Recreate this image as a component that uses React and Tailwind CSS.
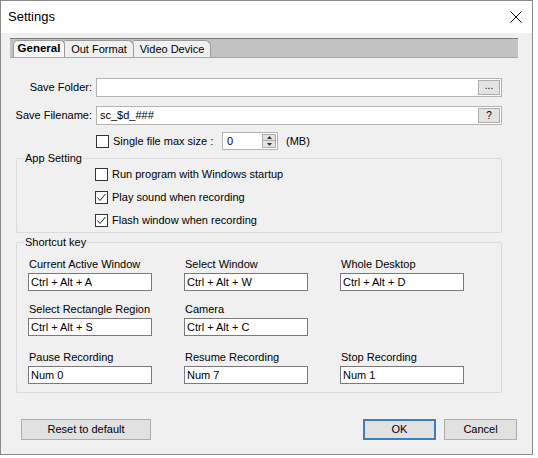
import React from 'react';

const Check = ({ checked }) => (
  <span className="w-[13px] h-[13px] border border-[#333333] bg-white flex items-center justify-center shrink-0">
    {checked && (
      <svg width="11" height="11" viewBox="0 0 11 11">
        <path d="M1.5 5.5 L4 8.5 L9.5 2" fill="none" stroke="#222" strokeWidth="1" />
      </svg>
    )}
  </span>
);

const shortcuts = [
  [
    { label: 'Current Active Window', value: 'Ctrl + Alt + A' },
    { label: 'Select Window', value: 'Ctrl + Alt + W' },
    { label: 'Whole Desktop', value: 'Ctrl + Alt + D' },
  ],
  [
    { label: 'Select Rectangle Region', value: 'Ctrl + Alt + S' },
    { label: 'Camera', value: 'Ctrl + Alt + C' },
  ],
  [
    { label: 'Pause Recording', value: 'Num 0' },
    { label: 'Resume Recording', value: 'Num 7' },
    { label: 'Stop Recording', value: 'Num 1' },
  ],
];

const rowMargins = ['mt-[6px]', 'mt-[10px]', 'mt-[13px]'];

const App = () => {
  return (
    <div className="w-[538px] h-[458px] bg-white font-['Liberation_Sans',Arial,sans-serif] text-[11px] text-black">
      <div className="w-[533px] h-[455px] border border-[#8a8a8a] bg-[#f0f0f0] flex flex-col">
        {/* title bar */}
        <div className="h-[32px] bg-white flex items-center justify-between pl-[7px] pr-[10px]">
          <span className="text-[13px]">Settings</span>
          <svg width="12" height="12" viewBox="0 0 12 12">
            <path d="M0.5 0.5 L11.5 11.5 M11.5 0.5 L0.5 11.5" stroke="#111" strokeWidth="1" />
          </svg>
        </div>

        {/* tabs */}
        <div className="mt-[5px] ml-[9px] w-[508px] h-[20px] bg-[#c2c2c2] border-t border-t-[#7c7c7c] border-b border-b-[#a8a8a8] flex items-end pl-[3px]">
          <div className="h-[17px] px-[4px] bg-[#f7f7f7] border border-b-0 border-[#9a9a9a] rounded-t-[5px] flex items-center font-bold text-[11.5px] w-[52px] justify-center">
            General
          </div>
          <div className="h-[17px] bg-[#f0f0f0] border border-b-0 border-l-0 border-[#9a9a9a] rounded-tr-[6px] flex items-center justify-center w-[69px]">
            Out Format
          </div>
          <div className="h-[17px] bg-[#f0f0f0] border border-b-0 border-l-0 border-[#9a9a9a] rounded-tr-[6px] flex items-center justify-center w-[77px]">
            Video Device
          </div>
        </div>

        {/* save folder */}
        <div className="mt-[20px] flex items-center">
          <span className="w-[91px] text-right">Save Folder:</span>
          <div className="ml-[4px] w-[406px] h-[19px] bg-white border border-[#b4b4b4] flex items-center justify-end pr-[1px]">
            <div className="w-[22px] h-[15px] bg-[#e3e3e3] border border-[#adadad] flex items-center justify-center text-[10px] leading-none pb-[3px]">
              ...
            </div>
          </div>
        </div>

        {/* save filename */}
        <div className="mt-[9px] flex items-center">
          <span className="w-[91px] text-right">Save Filename:</span>
          <div className="ml-[4px] w-[406px] h-[19px] bg-white border border-[#b4b4b4] flex items-center justify-between pl-[3px] pr-[1px]">
            <span>sc_$d_###</span>
            <div className="w-[22px] h-[15px] bg-[#e3e3e3] border border-[#adadad] flex items-center justify-center text-[10px]">
              ?
            </div>
          </div>
        </div>

        {/* single file max size */}
        <div className="mt-[7px] flex items-center pl-[95px] h-[18px]">
          <Check checked={false} />
          <span className="ml-[4px] w-[109px]">Single file max size :</span>
          <div className="w-[56px] h-[18px] bg-white border border-[#b4b4b4] flex items-center justify-between pl-[4px] pr-[1px]">
            <span>0</span>
            <div className="w-[14px] h-[14px] flex flex-col">
              <div className="h-[7px] bg-[#e3e3e3] border border-[#adadad] flex items-center justify-center">
                <svg width="5" height="3" viewBox="0 0 5 3"><path d="M2.5 0 L5 3 L0 3 Z" fill="#333" /></svg>
              </div>
              <div className="h-[7px] bg-[#e3e3e3] border border-t-0 border-[#adadad] flex items-center justify-center">
                <svg width="5" height="3" viewBox="0 0 5 3"><path d="M0 0 L5 0 L2.5 3 Z" fill="#333" /></svg>
              </div>
            </div>
          </div>
          <span className="ml-[8px]">(MB)</span>
        </div>

        {/* app setting group */}
        <div className="mt-[8px] ml-[15px] w-[486px] border border-[#dcdcdc] rounded-[2px]">
          <span className="block w-fit -mt-[9px] ml-[7px] px-[1px] bg-[#f0f0f0] leading-[16px]">App Setting</span>
          <div className="-mt-[3px] pl-[78px] flex flex-col">
            {[
              ['Run program with Windows startup', false],
              ['Play sound when recording', true],
              ['Flash window when recording', true],
            ].map(([text, checked]) => (
              <div key={text} className="h-[23px] flex items-center">
                <Check checked={checked} />
                <span className="ml-[4px]">{text}</span>
              </div>
            ))}
          </div>
        </div>

        {/* shortcut group */}
        <div className="mt-[9px] ml-[15px] w-[486px] border border-[#dcdcdc] rounded-[2px] pb-[8px]">
          <span className="block w-fit -mt-[9px] ml-[7px] px-[1px] bg-[#f0f0f0] leading-[16px]">Shortcut key</span>
          {shortcuts.map((row, i) => (
            <div key={i} className={`${rowMargins[i]} pl-[11px] flex gap-x-[32px]`}>
              {row.map((s) => (
                <div key={s.label} className="w-[124px] flex flex-col">
                  <span className="leading-[16px] pl-[1px]">{s.label}</span>
                  <div className="mt-[1px] h-[18px] bg-white border border-[#7a7a7a] flex items-center pl-[2px]">
                    {s.value}
                  </div>
                </div>
              ))}
            </div>
          ))}
        </div>

        {/* buttons */}
        <div className="mt-[26px] ml-[20px] mr-[15px] flex items-center justify-between">
          <div className="w-[130px] h-[21px] bg-[#e1e1e1] border border-[#adadad] flex items-center justify-center">
            Reset to default
          </div>
          <div className="flex gap-[8px]">
            <div className="w-[73px] h-[21px] bg-[#e1e1e1] border-2 border-[#3d7ebb] flex items-center justify-center">
              OK
            </div>
            <div className="w-[73px] h-[21px] bg-[#e1e1e1] border border-[#adadad] flex items-center justify-center">
              Cancel
            </div>
          </div>
        </div>
      </div>
    </div>
  );
};

export default App;
